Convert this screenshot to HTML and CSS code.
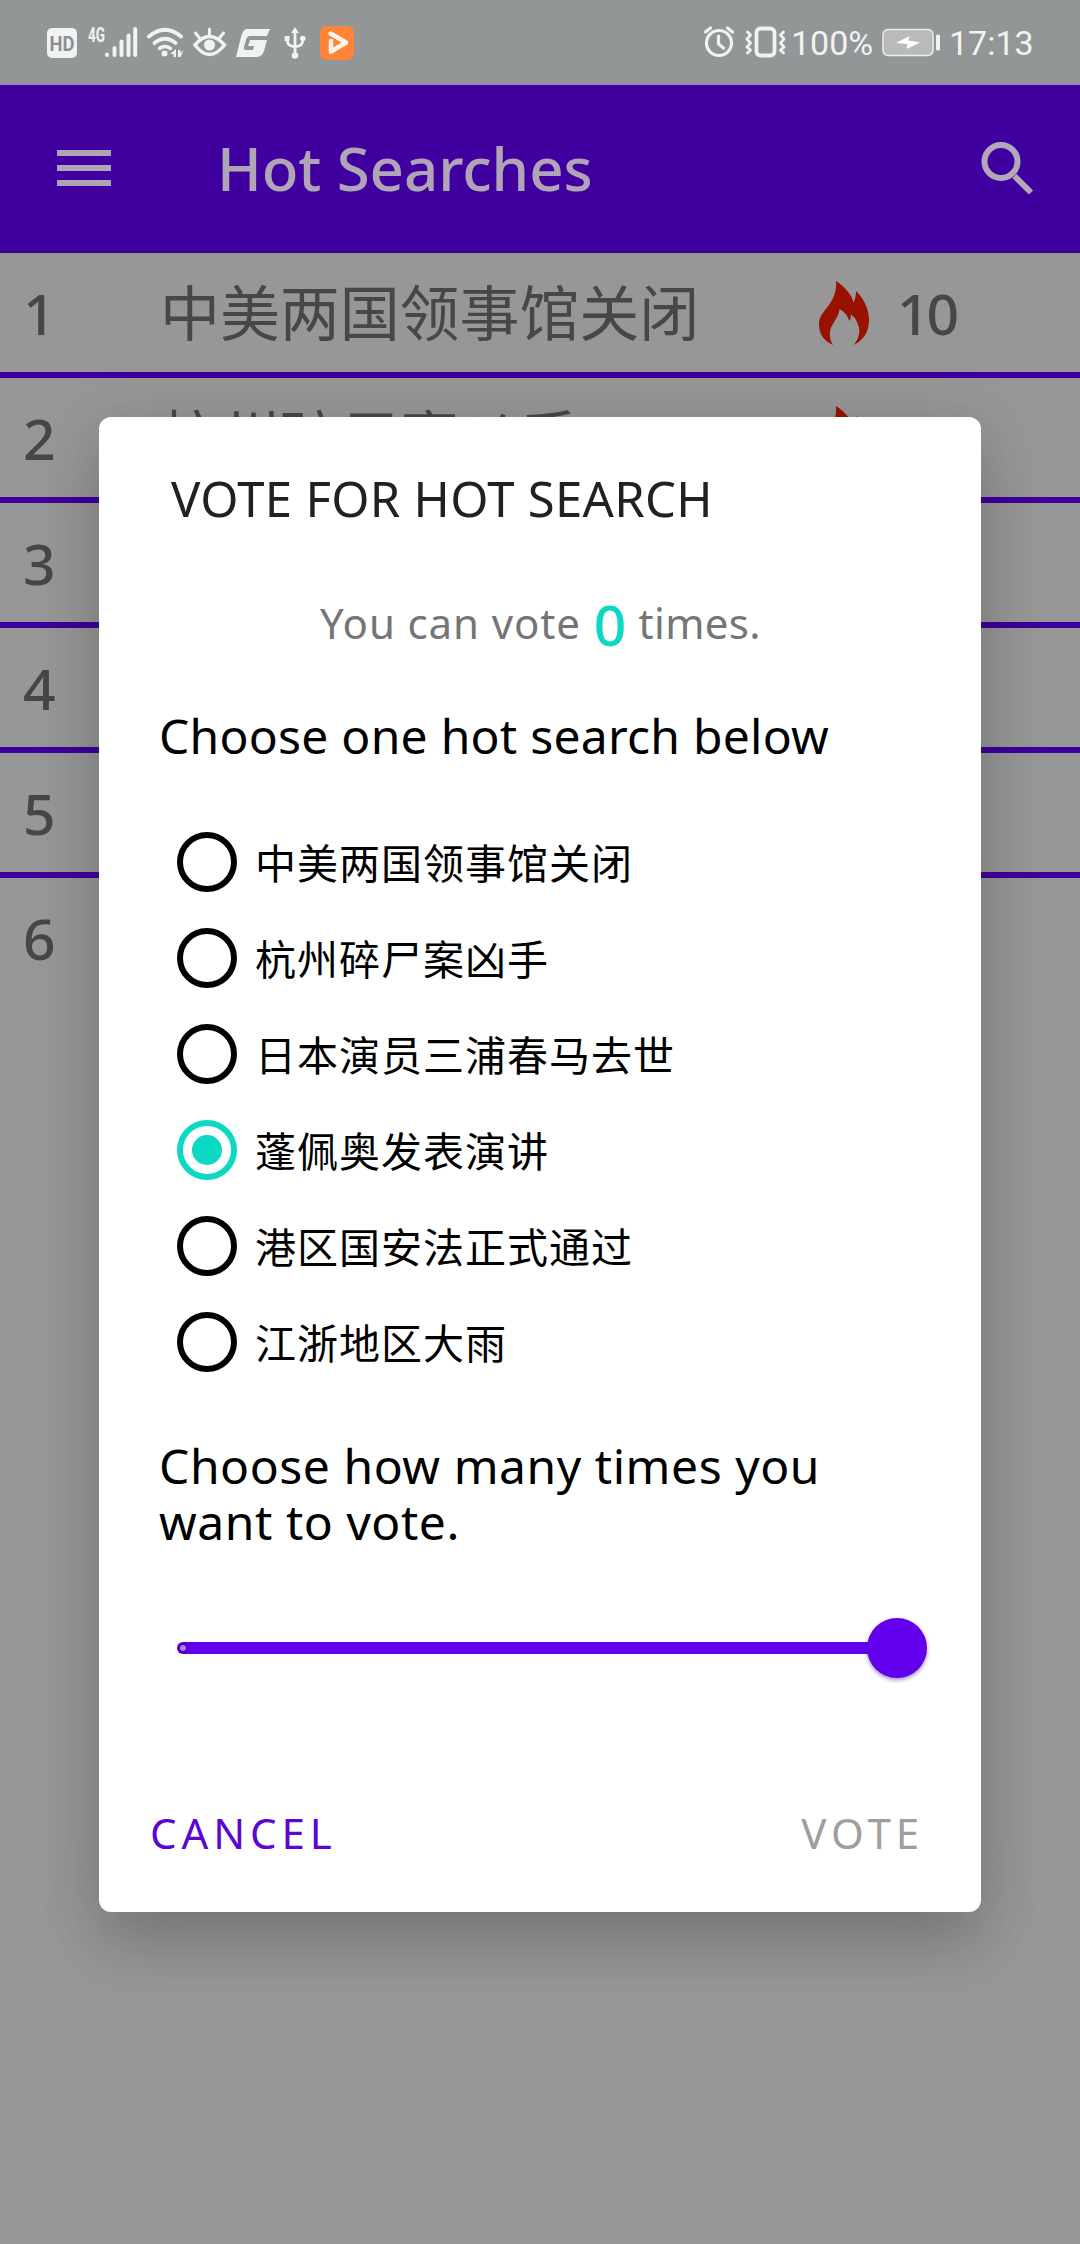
FILE: index.html
```html
<!DOCTYPE html>
<html lang="zh-CN">
<head>
<meta charset="utf-8">
<title>Hot Searches</title>
<link rel="stylesheet" href="styles.css">
</head>
<body>
<div class="screen">
  <header class="status">
    <svg class="status-icons" width="310" height="48" viewBox="46 16 310 48">
      <rect x="47" y="28" width="30" height="30" rx="5" fill="#f1f2f2"/>
      <text x="62" y="50.500" class="hd" textLength="25" lengthAdjust="spacingAndGlyphs">HD</text>
      <text x="96.500" y="41.500" class="net" textLength="17" lengthAdjust="spacingAndGlyphs">4G</text>
      <g stroke="#f1f2f2" stroke-width="4" stroke-linecap="round" fill="none">
        <path d="M107 54.500v.5M114.500 48v7M121.500 41.500v13.500M128.500 35.500v19.500M135.200 29v26"/>
        <path d="M149 36.500q16-13.500 32 0M154.500 43q10.500-8.500 21 0"/>
        <path d="M159.500 48.500q5.500-4 11 0" stroke-width="3.500"/>
        <path d="M195 45q14.500-17 29.500 0q-15 19-29.500 0z" stroke-width="3.500"/>
        <path d="M209.500 35v-6M199.500 38l-4-5M219.500 38l4-5" stroke-width="3"/>
        <path d="M295 32v23M287.500 39v3q0 3.500 7.500 5q7.500-1.500 7.500-5v-3" stroke-width="2.800"/>
      </g>
      <g fill="#f1f2f2">
        <circle cx="164.500" cy="53.500" r="3"/>
        <path d="M170 54l6-5v8h-2.500v-3zM178 50h2.500v3l3-3-3 7h-2.500z"/>
        <circle cx="209.500" cy="45" r="5.500"/>
        <path d="M247 29h23l-3 7h-17q-3 0-4 4l-2 7q-1 3 2 3h7l1-4h-6l2-6h17l-3 11q-2 6-8 6h-20l5-20q2-8 6-8z"/>
        <path d="M291 33l4-6 4 6zM284.500 36h5v5h-5z"/>
        <circle cx="302.800" cy="38.500" r="2.800"/><circle cx="295" cy="55.500" r="3.300"/>
      </g>
      <rect x="320" y="26" width="34" height="34" rx="7" fill="#ff8437"/>
      <path d="M330.500 33.500L346 42.500L331 51.500V41" fill="none" stroke="#fff5ea" stroke-width="4.500" stroke-linecap="round" stroke-linejoin="round"/>
    </svg>
    <div class="status-right">
      <svg width="84" height="40" viewBox="702 24 84 40" fill="none" stroke="#f1f2f2" stroke-width="3.200" stroke-linecap="round" stroke-linejoin="round">
        <circle cx="719" cy="43" r="12.500"/>
        <path d="M718.500 36v8l5 4M705.500 32l5-4M732.500 32l-5-4"/>
        <rect x="756.500" y="28.500" width="18" height="27" rx="4" stroke-width="3.800"/>
        <path d="M747.500 32l3 3-3.500 4 3.500 4-3.500 4 3.500 3-3 3M783.500 32l-3 3 3.500 4-3.500 4 3.500 4-3.500 3 3 3" stroke-width="2.800"/>
      </svg>
      <span class="pct">100%</span>
      <svg class="battery" width="60" height="40" viewBox="881 24 60 40">
        <rect x="883" y="29.500" width="50" height="26" rx="5" fill="#b9bbbb" stroke="#eceded" stroke-width="1.500"/>
        <rect x="936" y="34.500" width="4" height="16" rx="1.500" fill="#f1f2f2"/>
        <path d="M896 43l13.500-7-1 4.500 11.500 2-13.500 6.500 1-5z" fill="#fff"/>
      </svg>
      <span class="clock">17:13</span>
    </div>
  </header>
  <nav class="appbar">
    <svg width="54" height="36" viewBox="0 0 54 36" fill="#b0a5b6"><path d="M0 0h54v6H0zM0 15h54v6H0zM0 30h54v6H0z"/></svg>
    <h1>Hot Searches</h1>
    <svg class="search" width="54" height="54" viewBox="0 0 54 54" fill="none" stroke="#b3a7ba"><circle cx="21" cy="20.500" r="16.500" stroke-width="6"/><path d="M34.500 35l16.500 16.500" stroke-width="6"/></svg>
  </nav>
  <svg width="0" height="0" class="defs"><symbol id="flame" viewBox="0 0 50 64"><path d="M17 0C26 6 33 14 34.500 21.500Q37 17 37 10C45 18 50 28 50 39Q50 56 35 64Q44 52 38 41Q36 36 32 33.500Q32 37 30.500 40Q27 31 20.500 28C20 37 12 42 11 51Q10 58 14 64Q0 58 0 43C0 29 19 23 17 0z" fill="#981200"/></symbol></svg>
  <main class="list">
    <div class="row"><span class="rank">1</span><span class="topic">中美两国领事馆关闭</span><svg class="flame"><use href="#flame"/></svg><span class="votes">10</span></div>
    <div class="row"><span class="rank">2</span><span class="topic">杭州碎尸案凶手</span><svg class="flame"><use href="#flame"/></svg></div>
    <div class="row"><span class="rank">3</span></div>
    <div class="row"><span class="rank">4</span></div>
    <div class="row"><span class="rank">5</span></div>
    <div class="row"><span class="rank">6</span></div>
  </main>
  <section class="dialog">
    <h2>VOTE FOR HOT SEARCH</h2>
    <p class="quota">You can vote <b>0</b><span> times.</span></p>
    <p class="prompt one">Choose one hot search below</p>
    <ul class="options">
      <li><i class="radio"></i><span>中美两国领事馆关闭</span></li>
      <li><i class="radio"></i><span>杭州碎尸案凶手</span></li>
      <li><i class="radio"></i><span>日本演员三浦春马去世</span></li>
      <li><i class="radio on"></i><span>蓬佩奥发表演讲</span></li>
      <li><i class="radio"></i><span>港区国安法正式通过</span></li>
      <li><i class="radio"></i><span>江浙地区大雨</span></li>
    </ul>
    <p class="prompt two">Choose how many times you<br>want to vote.</p>
    <div class="slider"><span class="track"></span><span class="thumb"></span></div>
    <div class="actions"><span class="cancel">CANCEL</span><span class="vote">VOTE</span></div>
  </section>
</div>
</body>
</html>
```
FILE: styles.css
```css
* { box-sizing: border-box; margin: 0; padding: 0; }
body { font-family: "Noto Sans", "Noto Sans CJK SC", sans-serif; background: #979797; }
.screen { position: relative; width: 1080px; height: 2244px; overflow: hidden; background: #979797; }

.status { display: flex; justify-content: space-between; height: 85px; padding: 16px 48px 0 46px; background: #929697; border-bottom: 2px solid #9c84c0; font-family: Roboto, sans-serif; font-size: 34px; line-height: 38px; color: #f1f2f2; }
.hd { font: bold 21px Roboto, sans-serif; fill: #8b8f90; text-anchor: middle; }
.net { font: bold 20px Roboto, sans-serif; fill: #f1f2f2; text-anchor: middle; }
.status-right { display: flex; padding-top: 8px; white-space: nowrap; }
.pct { width: 95px; padding-left: 5px; }
.battery { flex: none; }
.clock { width: 91px; padding-left: 8px; }

.appbar { display: flex; align-items: center; height: 168px; padding: 0 46px 0 57px; background: #4000a0; border-bottom: 2px solid #34057c; }
.appbar h1 { margin-left: 106px; flex: 1; font-size: 60px; font-weight: 500; line-height: 80px; letter-spacing: -0.1px; color: #b0a5b6; }

.defs { position: absolute; }
.row { display: flex; align-items: center; height: 125px; padding-left: 23px; border-bottom: 6px solid #3e009b; font-size: 57px; line-height: 80px; color: #474747; }
.row:last-child { border-bottom: 0; padding-bottom: 6px; }
.rank { width: 137px; font-weight: 500; }
.topic { width: 659px; padding-bottom: 5px; font-size: 60px; letter-spacing: -0.1px; font-family: "Noto Sans CJK SC", sans-serif; font-weight: 400; }
.flame { width: 50px; height: 64px; }
.votes { margin-left: 28px; font-weight: 500; letter-spacing: -3px; }

.dialog { position: absolute; left: 99px; top: 417px; width: 882px; height: 1495px; padding: 51px 54px 0; border-radius: 12px; background: #fff; box-shadow: 0 38px 60px rgba(0,0,0,.14), 0 6px 70px rgba(0,0,0,.12); }
h2 { padding-left: 18px; font-size: 49px; font-weight: 450; line-height: 60px; letter-spacing: 0.3px; white-space: nowrap; color: #212121; }
.quota { margin-top: 65px; height: 60px; padding-left: 167px; font-size: 42px; line-height: 60px; letter-spacing: 0.9px; white-space: nowrap; color: #757575; }
.quota b { margin: 0 1px; font-size: 57px; font-weight: 500; line-height: 0; vertical-align: -7px; color: #0cd8c4; letter-spacing: 0; }
.quota span { letter-spacing: 0.3px; }
.prompt { padding-left: 6px; font-size: 48px; line-height: 56px; white-space: nowrap; color: #000; }
.one { margin-top: 55px; letter-spacing: 0.25px; }
.two { margin-top: 48px; letter-spacing: 0.55px; }
.options { margin-top: 50px; list-style: none; }
.options li { display: flex; align-items: center; height: 96px; padding-left: 24px; font-family: "Noto Sans CJK SC", sans-serif; font-size: 41px; letter-spacing: 1px; color: #000; }
.options span { padding-bottom: 2px; }
.radio { display: flex; width: 60px; height: 60px; margin-right: 18px; border: 6px solid #000; border-radius: 50%; }
.radio.on { border-color: #0cd8c4; }
.radio.on::after { content: ""; width: 30px; height: 30px; margin: auto; border-radius: 50%; background: #0cd8c4; }
.slider { display: flex; align-items: center; height: 60px; margin: 68px 0 0 24px; }
.track { width: 700px; height: 12px; border-radius: 6px; background: radial-gradient(circle at 6px 6px, #b87aff 0 2.500px, #4b00c0 3.500px 5px, transparent 6px), #6200ee; }
.thumb { width: 60px; height: 60px; margin-left: -10px; border-radius: 50%; background: #6200ee; box-shadow: 0 2px 4px rgba(60,0,120,.45); }
.actions { display: flex; justify-content: space-between; margin-top: 125px; padding-right: 3px; font-size: 42px; line-height: 60px; letter-spacing: 4.900px; }
.cancel { margin-left: -3px; color: #5b06d2; }
.vote { color: #9e9e9e; }
```
